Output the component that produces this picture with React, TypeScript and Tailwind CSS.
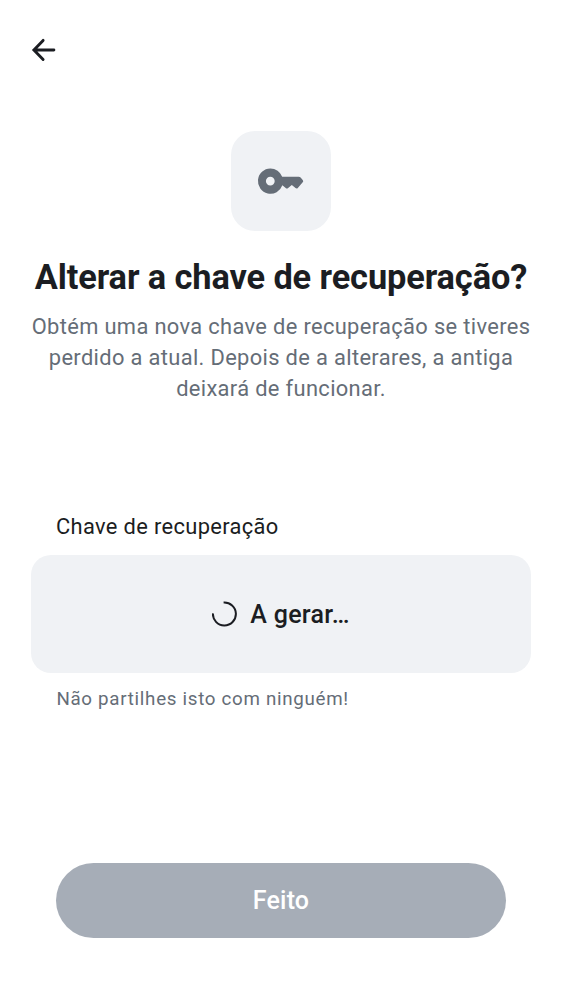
export default function App() {
  return (
    <main className="flex h-[1000px] w-[562px] flex-col bg-white font-['Roboto',sans-serif] text-[#1b1d22]">
      <header className="flex h-[131px] items-start pt-[35px] pl-[28px]">
        <button aria-label="Voltar">
          <svg width="30" height="30" viewBox="0 0 30 30" fill="none" stroke="currentColor" strokeWidth="2.9" strokeLinecap="round">
            <path d="M15.1 5.4L5.9 15l9.2 9.4M6.5 15H25.9" />
          </svg>
        </button>
      </header>
      <div className="flex size-[100px] items-center justify-center self-center rounded-[24px] bg-[#f0f2f5]">
        <svg width="50" height="50" viewBox="0 0 50 50" fill="#656d77" fillRule="evenodd">
          <path d="M14.3 12.5A12.6 12.6 0 0 1 26.2 20.8H42.7Q43.8 20.8 44.6 21.6L46.7 23.9Q47.8 25.1 46.7 26.3L41.8 32Q40.7 33.1 39.5 32.1L35.8 29L32.1 32.1Q30.9 33.1 29.7 32.1L26.4 29.3A12.6 12.6 0 1 1 14.3 12.5ZM14.3 20.7a4.4 4.4 0 1 0 0 8.8a4.4 4.4 0 1 0 0-8.8Z" />
        </svg>
      </div>
      <h1 className="mt-[25px] text-center text-[34.375px] leading-[42px] font-bold tracking-[-0.11px] whitespace-nowrap">Alterar a chave de recuperação?</h1>
      <p className="mt-[13px] text-center text-[21.875px] leading-[31px] tracking-[0.35px] whitespace-nowrap text-[#656d77]">
        Obtém uma nova chave de recuperação se tiveres<br />perdido a atual. Depois de a alterares, a antiga<br />deixará de funcionar.
      </p>
      <h2 className="mt-[107px] ml-[56px] text-[21.875px] leading-[31px] tracking-[0.35px]">Chave de recuperação</h2>
      <div className="mx-[31px] mt-[13px] flex h-[118px] items-center justify-center gap-[12px] rounded-[20px] bg-[#f0f2f5]">
        <svg width="26" height="26" viewBox="0 0 26 26" fill="none" stroke="currentColor" strokeWidth="2">
          <path d="M11.6 1.5A11.5 11.5 0 1 1 .9 12.4" />
        </svg>
        <span className="pt-[2px] text-[25px] font-medium tracking-[0.3px]">A gerar…</span>
      </div>
      <p className="mt-[14px] ml-[56.4px] text-[18.75px] leading-[25px] tracking-[0.7px] text-[#656d77]">Não partilhes isto com ninguém!</p>
      <button className="mx-[56px] mt-[151px] h-[75px] rounded-full bg-[#a6adb7] text-[25px] font-medium tracking-[0.2px] text-white">Feito</button>
    </main>
  );
}
